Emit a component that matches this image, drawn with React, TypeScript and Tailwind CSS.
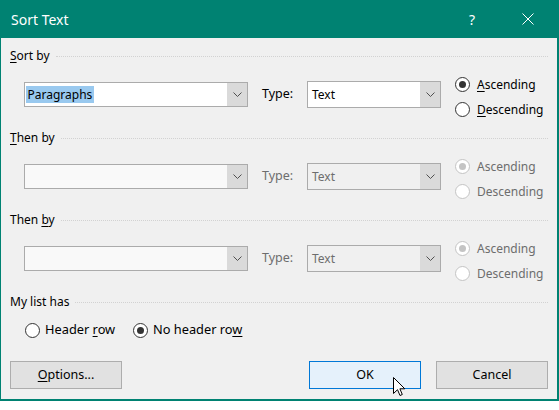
import type { ReactNode } from "react";

function Chevron() {
  return (
    <svg width="9" height="5" viewBox="0 0 9 5">
      <polyline points="0.5,0.5 4.5,4.5 8.5,0.5" fill="none" stroke="#505050" strokeWidth="1" />
    </svg>
  );
}

function Radio({ checked, disabled }: { checked?: boolean; disabled?: boolean }) {
  const ring = disabled ? "border-[#c4c4c4]" : "border-[#333333]";
  const dot = disabled ? "bg-[#c4c4c4]" : "bg-[#333333]";
  return (
    <span className={`flex h-[15px] w-[15px] shrink-0 items-center justify-center rounded-full border bg-white ${ring}`}>
      {checked && <span className={`h-[7px] w-[7px] rounded-full ${dot}`} />}
    </span>
  );
}

function Key({ children }: { children: ReactNode }) {
  return <u className="decoration-1 underline-offset-[2px]">{children}</u>;
}

function SectionHeader({ children }: { children: ReactNode }) {
  return (
    <div className="flex h-[16px] items-center">
      <span className="text-[12px] leading-[16px] text-black">{children}</span>
      <div className="ml-[6px] flex-1 border-t border-dotted border-[#d2d2d2]" />
    </div>
  );
}

function SortSection({ label, enabled }: { label: ReactNode; enabled?: boolean }) {
  const dim = enabled ? "text-black" : "text-[#6d6d6d]";
  return (
    <div className="h-[82px]">
      <SectionHeader>{label}</SectionHeader>
      <div className="mt-[8px] flex h-[50px] items-start">
        {/* field combo */}
        <div
          className={`ml-[14px] mt-[10px] flex h-[25px] w-[224px] border border-[#ababab] ${enabled ? "bg-white" : "bg-[#f9f9f9]"}`}
        >
          <div className="flex flex-1 items-center pl-[1px]">
            {enabled && (
              <span className="inline-block bg-[#99c9ef] px-[1.5px] text-[12px] leading-[17px] text-black">
                Paragraphs
              </span>
            )}
          </div>
          <div className="flex w-[20px] items-center justify-center bg-[#dadada]">
            <Chevron />
          </div>
        </div>

        <div className={`ml-[14px] mt-[10px] flex h-[25px] w-[45px] items-center text-[12.5px] ${dim}`}>Type:</div>

        {/* type combo */}
        <div
          className={`mt-[9px] flex h-[27px] w-[134px] border border-[#ababab] ${enabled ? "bg-white" : "bg-[#f0f0f0]"}`}
        >
          <div className={`flex flex-1 items-center pl-[4px] text-[12px] ${dim}`}>Text</div>
          <div className="flex w-[20px] items-center justify-center bg-[#dadada]">
            <Chevron />
          </div>
        </div>

        <div className="ml-[14px] flex flex-col">
          <div className="flex h-[25px] items-center gap-[7px]">
            <Radio checked disabled={!enabled} />
            <span className={`text-[12px] ${dim}`}>{enabled ? <><Key>A</Key>scending</> : "Ascending"}</span>
          </div>
          <div className="flex h-[25px] items-center gap-[7px]">
            <Radio disabled={!enabled} />
            <span className={`text-[12px] ${dim}`}>{enabled ? <><Key>D</Key>escending</> : "Descending"}</span>
          </div>
        </div>
      </div>
    </div>
  );
}

export default function App() {
  return (
    <div className="relative h-[410px] w-[559px] bg-white font-['Noto_Sans',sans-serif]">
      <div className="flex h-[401px] flex-col bg-[#008272]">
        {/* Title bar */}
        <div className="flex h-[38px] shrink-0 items-center pl-[11px] text-white">
          <span className="text-[14px]">Sort Text</span>
          <div className="ml-auto flex items-center">
            <span className="w-[12px] text-center text-[14px]">?</span>
            <svg className="ml-[44px] mr-[25px]" width="12" height="12" viewBox="0 0 12 12">
              <path d="M0.5 0.5 L11.5 11.5 M11.5 0.5 L0.5 11.5" stroke="white" strokeWidth="1" />
            </svg>
          </div>
        </div>

        {/* Body */}
        <div className="mb-[2px] ml-[1px] mr-[2px] flex flex-1 flex-col bg-[#f0f0f0] px-[9px] pb-[10px] pt-[10px]">
          <SortSection label={<><Key>S</Key>ort by</>} enabled />
          <SortSection label={<><Key>T</Key>hen by</>} />
          <SortSection label={<>Then <Key>b</Key>y</>} />

          <div>
            <SectionHeader>My list has</SectionHeader>
            <div className="mt-[10px] flex h-[20px] items-center text-[12.8px] text-black">
              <div className="ml-[15px] flex w-[108px] items-center gap-[5px]">
                <Radio />
                <span>Header <Key>r</Key>ow</span>
              </div>
              <div className="flex items-center gap-[5px]">
                <Radio checked />
                <span>No header ro<Key>w</Key></span>
              </div>
            </div>
          </div>

          {/* Buttons */}
          <div className="mt-auto flex h-[28px] items-stretch text-[12.5px] text-black">
            <button className="w-[112px] border border-[#adadad] bg-[#e1e1e1]">
              <Key>O</Key>ptions...
            </button>
            <button className="ml-auto w-[112px] border border-[#0078d7] bg-[#e5f1fb]">OK</button>
            <button className="ml-[15px] w-[112px] border border-[#adadad] bg-[#e1e1e1]">Cancel</button>
          </div>
        </div>
      </div>

      {/* mouse pointer over OK */}
      <svg className="absolute left-[393px] top-[377px]" width="13" height="20" viewBox="0 0 13 20">
        <path
          d="M0.5 0.5 L0.5 16.5 L4.5 12.7 L7 18.5 L9.3 17.5 L6.9 11.8 L11.8 11.8 Z"
          fill="white"
          stroke="black"
          strokeWidth="1"
          strokeLinejoin="round"
        />
      </svg>
    </div>
  );
}
